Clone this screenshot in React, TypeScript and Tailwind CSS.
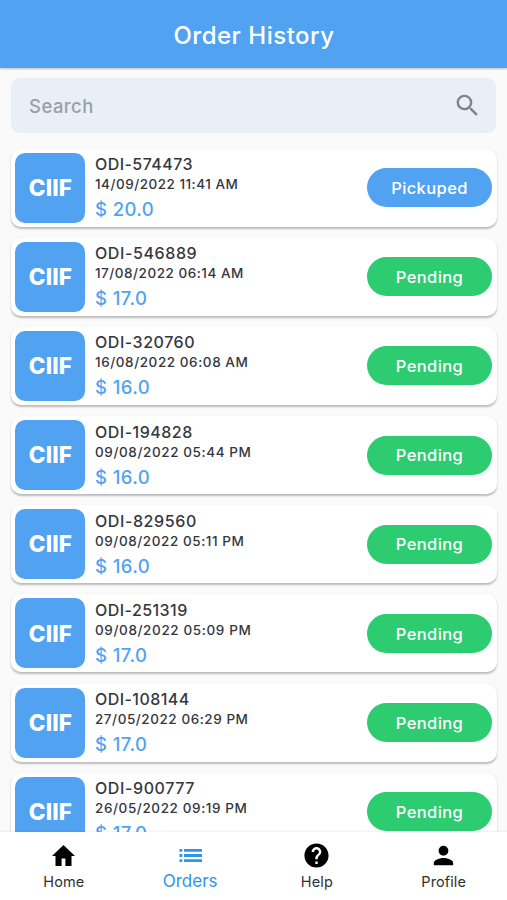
import React from "react";
import { MdSearch, MdHelp, MdPerson } from "react-icons/md";

type Order = { id: string; date: string; price: string; status: "Pickuped" | "Pending"; idTrack: string; dateTrack: string };

const orders: Order[] = [
  { id: "ODI-574473", date: "14/09/2022 11:41 AM", price: "$ 20.0", status: "Pickuped", idTrack: "tracking-[0.45px]", dateTrack: "tracking-[0.5px]" },
  { id: "ODI-546889", date: "17/08/2022 06:14 AM", price: "$ 17.0", status: "Pending", idTrack: "tracking-[0.6px]", dateTrack: "tracking-[0.52px]" },
  { id: "ODI-320760", date: "16/08/2022 06:08 AM", price: "$ 16.0", status: "Pending", idTrack: "tracking-[0.55px]", dateTrack: "tracking-[0.57px]" },
  { id: "ODI-194828", date: "09/08/2022 05:44 PM", price: "$ 16.0", status: "Pending", idTrack: "tracking-[0.5px]", dateTrack: "tracking-[0.6px]" },
  { id: "ODI-829560", date: "09/08/2022 05:11 PM", price: "$ 16.0", status: "Pending", idTrack: "tracking-[0.6px]", dateTrack: "tracking-[0.57px]" },
  { id: "ODI-251319", date: "09/08/2022 05:09 PM", price: "$ 17.0", status: "Pending", idTrack: "tracking-[0.45px]", dateTrack: "tracking-[0.62px]" },
  { id: "ODI-108144", date: "27/05/2022 06:29 PM", price: "$ 17.0", status: "Pending", idTrack: "tracking-[0.45px]", dateTrack: "tracking-[0.55px]" },
  { id: "ODI-900777", date: "26/05/2022 09:19 PM", price: "$ 17.0", status: "Pending", idTrack: "tracking-[0.6px]", dateTrack: "tracking-[0.6px]" },
];

function OrderCard({ order }: { order: Order }) {
  return (
    <li className="flex h-[78px] shrink-0 items-center rounded-[10px] bg-white pr-[5px] pl-[4.4px] shadow-[0_1.5px_2px_rgba(0,0,0,0.25)]">
      <div className="flex size-[70px] shrink-0 items-center justify-center rounded-[10px] bg-[#51a3f2] text-[22.5px] font-extrabold tracking-[0.1px] text-white">
        CIIF
      </div>
      <div className="ml-[9.6px] flex flex-1 flex-col pt-[4px] whitespace-nowrap text-[#35373f]">
        <span className={`text-[16px] leading-[21px] font-medium ${order.idTrack}`}>{order.id}</span>
        <span className={`text-[13.5px] leading-[19px] font-medium ${order.dateTrack}`}>{order.date}</span>
        <span className="text-[18.5px] leading-[31px] font-medium tracking-[0.4px] text-[#51a3f2]">{order.price}</span>
      </div>
      <span className={`flex h-[39px] w-[125px] items-center justify-center rounded-full pt-px text-[16.5px] font-medium tracking-[0.4px] text-white ${order.status === "Pickuped" ? "bg-[#51a3f2]" : "bg-[#2ecc71]"}`}>
        {order.status}
      </span>
    </li>
  );
}

export default function App() {
  return (
    <div className="flex h-[900px] w-[507px] flex-col overflow-hidden bg-[#fafafa] font-['Inter',sans-serif]">
      <header className="z-10 flex h-[68px] shrink-0 items-center justify-center bg-[#51a3f2] pt-[3px] pl-px text-[24px] font-medium tracking-[0.5px] text-white shadow-[0_1px_2px_rgba(0,0,0,0.25)]">
        Order History
      </header>
      <main className="flex min-h-0 flex-1 flex-col overflow-hidden pt-[10px] pr-[10px] pl-[11px]">
        <div className="mr-px flex h-[55px] shrink-0 items-center justify-between rounded-[9px] bg-[#e9eff6] pr-[14px] pl-[18px] text-[18.5px] font-medium tracking-[0.45px] text-[#9ba0a6]">
          <span className="pt-[2px]">Search</span>
          <MdSearch className="size-[29px] text-[#7f8386]" />
        </div>
        <ul className="mt-[15.6px] flex flex-col gap-[11.17px]">
          {orders.map((o) => <OrderCard key={o.id} order={o} />)}
        </ul>
      </main>
      <nav className="z-10 grid h-[68px] shrink-0 grid-cols-4 bg-white text-[14.5px] text-[#303030] shadow-[0_-1px_2px_rgba(0,0,0,0.06)]">
        <div className="flex flex-col items-center pt-[9px] pl-px">
          <svg viewBox="0 0 29 29" className="size-[29px] text-black" fill="currentColor"><path d="M14.5 3.9 3 15.1h3.5V25h6.1v-7.4h3.8V25h6.1v-9.9H26z" /></svg>
          <span className="pt-px tracking-[0.15px]">Home</span>
        </div>
        <div className="flex flex-col items-center pt-[9px] text-[17px] text-[#2f95e8]">
          <svg viewBox="0 0 29 29" className="size-[29px]" fill="currentColor"><path d="M3.5 8h2.8v2.8H3.5zM8 8h18v2.8H8zM3.5 13.1h2.8v2.8H3.5zM8 13.1h18v2.8H8zM3.5 18.2h2.8V21H3.5zM8 18.2h18V21H8z" /></svg>
          <span className="-mt-px">Orders</span>
        </div>
        <div className="flex flex-col items-center pt-[9px]"><MdHelp className="size-[29px] text-black" /><span className="pt-px tracking-[0.15px]">Help</span></div>
        <div className="flex flex-col items-center pt-[9px]"><MdPerson className="size-[29px] text-black" /><span className="pt-px tracking-[0.1px]">Profile</span></div>
      </nav>
    </div>
  );
}
